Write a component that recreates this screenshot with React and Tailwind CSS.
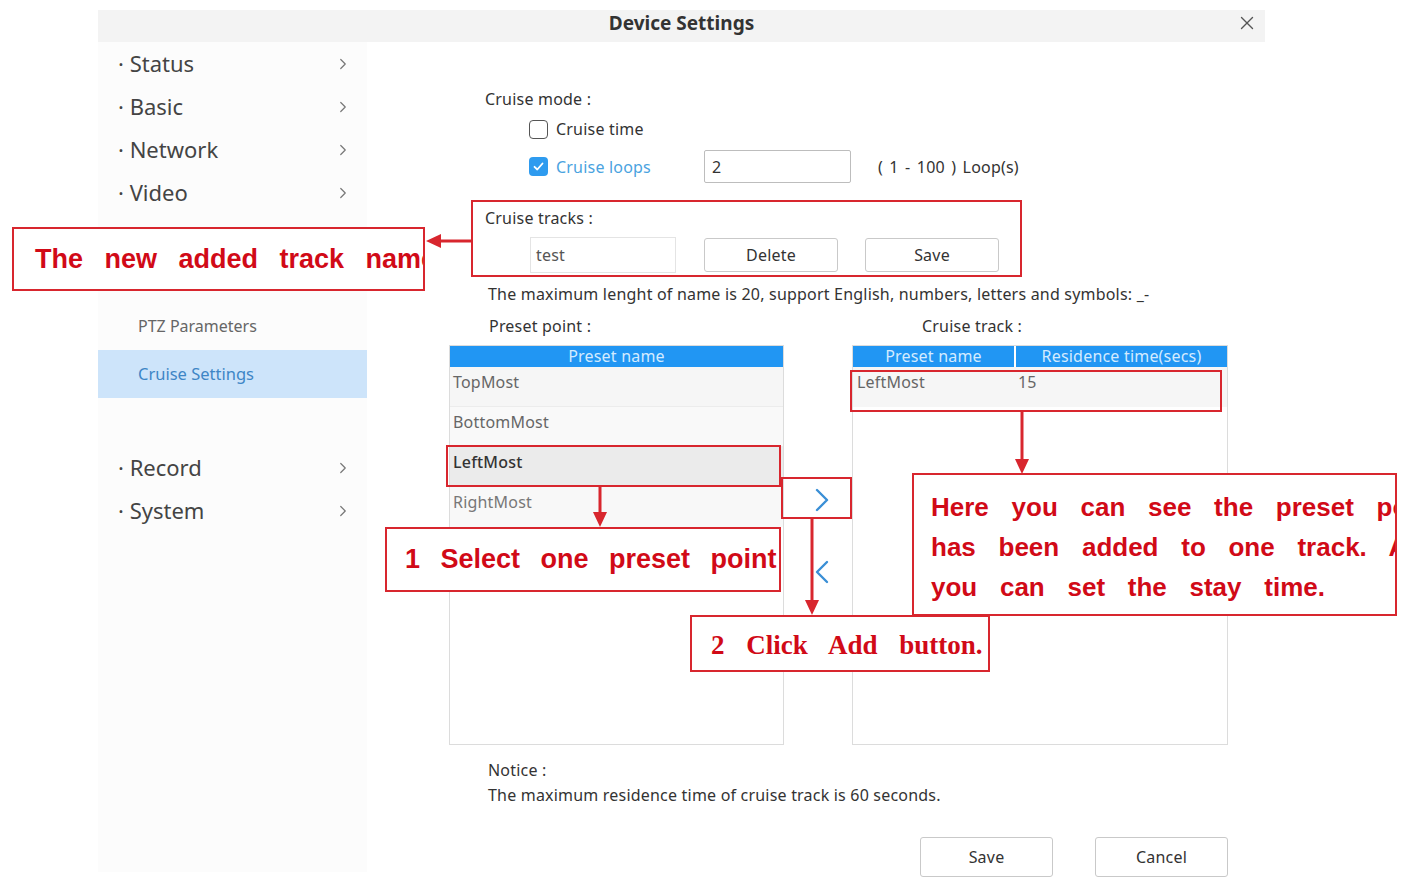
import React from "react";
import { ChevronRight, X } from "lucide-react";

const menuTop = ["Status", "Basic", "Network", "Video"];
const menuBottom = ["Record", "System"];

function MenuItem({ label }) {
  return (
    <div className="h-[43px] flex items-center justify-between pl-[20px] pr-[15px] text-[22px] text-[#444]">
      <span>· {label}</span>
      <ChevronRight size={18} strokeWidth={1.6} className="text-[#777]" />
    </div>
  );
}

function Chevron({ dir }) {
  return (
    <svg width="14" height="24" viewBox="0 0 14 24">
      <polyline
        points={dir === "right" ? "2,2 12,12 2,22" : "12,2 2,12 12,22"}
        fill="none"
        stroke="#3a8fd6"
        strokeWidth="2.4"
        strokeLinecap="round"
        strokeLinejoin="round"
      />
    </svg>
  );
}

export default function App() {
  return (
    <div className="relative w-[1409px] h-[881px] overflow-hidden bg-white font-['Noto_Sans',sans-serif]">
      {/* Dialog */}
      <div className="ml-[98px] w-[1167px] pt-[10px]">
        <div className="relative h-[32px] bg-[#f3f3f3] flex items-center justify-center pb-[6px]">
          <span className="text-[19px] font-bold text-[#333]">Device Settings</span>
          <X size={22} strokeWidth={1.5} className="absolute right-[7px] top-[2px] text-[#555]" />
        </div>

        <div className="flex">
          {/* Sidebar */}
          <div className="w-[269px] h-[830px] bg-[#fcfcfc] flex flex-col">
            {menuTop.map((m) => (
              <MenuItem key={m} label={m} />
            ))}
            <div className="h-[88px]" />
            <div className="h-[48px] flex items-center pl-[40px] text-[16px] text-[#666]">PTZ Parameters</div>
            <div className="h-[48px] flex items-center pl-[40px] text-[16.5px] text-[#3d86c6] bg-[#cde4fa]">Cruise Settings</div>
            <div className="h-[48px]" />
            {menuBottom.map((m) => (
              <MenuItem key={m} label={m} />
            ))}
          </div>

          {/* Content */}
          <div className="flex-1 pl-[82px] text-[16px] tracking-[0.2px] text-[#333]">
            <div className="mt-[46px] ml-[36px] leading-[22px]">Cruise mode :</div>

            <div className="mt-[4px] h-[30px] ml-[80px] flex items-center">
              <div className="w-[19px] h-[19px] rounded-[4px] border-[1.5px] border-[#555] bg-white" />
              <span className="ml-[8px]">Cruise time</span>
            </div>

            <div className="mt-[6px] h-[33px] ml-[80px] flex items-center">
              <div className="w-[19px] h-[19px] rounded-[4px] bg-[#2e9bef] flex items-center justify-center">
                <svg width="13" height="13" viewBox="0 0 13 13">
                  <polyline points="2.5,6.8 5.3,9.5 10.5,3.5" fill="none" stroke="#fff" strokeWidth="1.8" strokeLinecap="round" strokeLinejoin="round" />
                </svg>
              </div>
              <span className="ml-[8px] w-[148px] text-[#4aa3df]">Cruise loops</span>
              <div className="w-[147px] h-[33px] border border-[#bdbdbd] rounded-[2px] bg-white flex items-center pl-[7px]">2</div>
              <span className="ml-[27px] [word-spacing:2px]">( 1 - 100 ) Loop(s)</span>
            </div>

            <div className="mt-[24px] ml-[36px] leading-[22px]">Cruise tracks :</div>

            <div className="mt-[8px] ml-[81px] flex items-center">
              <div className="w-[146px] h-[36px] border border-[#e4e4e4] bg-white flex items-center pl-[5px] text-[#555]">test</div>
              <div className="ml-[28px] w-[134px] h-[34px] border border-[#c9c9c9] rounded-[3px] bg-white flex items-center justify-center">Delete</div>
              <div className="ml-[27px] w-[134px] h-[34px] border border-[#c9c9c9] rounded-[3px] bg-white flex items-center justify-center">Save</div>
            </div>

            <div className="mt-[10px] ml-[39px] leading-[22px] whitespace-nowrap tracking-[0.2px]">
              The maximum lenght of name is 20, support English, numbers, letters and symbols: _-
            </div>

            <div className="mt-[10px] ml-[40px] flex leading-[22px]">
              <span className="w-[433px]">Preset point :</span>
              <span>Cruise track :</span>
            </div>

            <div className="mt-[8px] flex">
              {/* Left table */}
              <div className="w-[335px] h-[400px] border border-[#dcdcdc] bg-white flex flex-col">
                <div className="h-[21px] bg-[#2196f3] text-[#d4ebff] text-center leading-[21px]">Preset name</div>
                <div className="h-[40px] bg-[#f6f6f6] border-b border-[#ececec] pl-[3px] pt-[3px] text-[#666]">TopMost</div>
                <div className="h-[40px] bg-[#f9f9f9] border-b border-[#ececec] pl-[3px] pt-[3px] text-[#666]">BottomMost</div>
                <div className="h-[40px] bg-[#ebebeb] pl-[3px] pt-[3px] text-[#333] font-medium">LeftMost</div>
                <div className="h-[40px] bg-[#f8f8f8] pl-[3px] pt-[3px] text-[#777]">RightMost</div>
              </div>

              {/* Middle arrows */}
              <div className="w-[68px] flex flex-col pt-[143px] pl-[31px] gap-[48px]">
                <Chevron dir="right" />
                <Chevron dir="left" />
              </div>

              {/* Right table */}
              <div className="w-[376px] h-[400px] border border-[#dcdcdc] bg-white flex flex-col">
                <div className="h-[21px] flex gap-[2px] text-[#d4ebff] leading-[21px]">
                  <div className="w-[161px] bg-[#2196f3] text-center">Preset name</div>
                  <div className="flex-1 bg-[#2196f3] text-center">Residence time(secs)</div>
                </div>
                <div className="h-[40px] bg-[#f6f6f6] flex pt-[3px] text-[#666]">
                  <span className="w-[163px] pl-[4px]">LeftMost</span>
                  <span className="pl-[2px]">15</span>
                </div>
              </div>
            </div>

            <div className="mt-[13px] ml-[39px] leading-[25px]">Notice :</div>
            <div className="ml-[39px] leading-[25px] tracking-[0.2px]">The maximum residence time of cruise track is 60 seconds.</div>

            <div className="mt-[29px] w-[779px] flex justify-end gap-[42px]">
              <div className="w-[133px] h-[40px] border border-[#c9c9c9] rounded-[3px] bg-white flex items-center justify-center">Save</div>
              <div className="w-[133px] h-[40px] border border-[#c9c9c9] rounded-[3px] bg-white flex items-center justify-center">Cancel</div>
            </div>
          </div>
        </div>
      </div>

      {/* Red highlight outlines */}
      <div className="absolute left-[471px] top-[200px] w-[551px] h-[77px] border-2 border-[#d8262e]" />
      <div className="absolute left-[446px] top-[445px] w-[335px] h-[42px] border-2 border-[#d8262e]" />
      <div className="absolute left-[781px] top-[477px] w-[71px] h-[42px] border-2 border-[#d8262e]" />
      <div className="absolute left-[850px] top-[370px] w-[372px] h-[42px] border-2 border-[#d8262e]" />

      {/* Annotation boxes */}
      <div className="absolute left-[12px] top-[227px] w-[413px] h-[64px] border-2 border-[#d8262e] bg-white overflow-hidden flex items-center pl-[21px] whitespace-nowrap font-['Liberation_Sans',Arial,sans-serif] font-bold text-[27px] text-[#d10a17] [word-spacing:14px]">
        The new added track name
      </div>

      <div className="absolute left-[385px] top-[527px] w-[396px] h-[65px] border-2 border-[#d8262e] bg-white overflow-hidden flex items-center pl-[18px] whitespace-nowrap font-['Liberation_Sans',Arial,sans-serif] font-bold text-[27px] text-[#d10a17] [word-spacing:13px]">
        1 Select one preset point
      </div>

      <div className="absolute left-[690px] top-[615px] w-[300px] h-[57px] border-2 border-[#d8262e] bg-white overflow-hidden flex items-center pl-[19px] pt-[4px] whitespace-nowrap font-['Liberation_Serif','Times_New_Roman',serif] font-bold text-[27px] text-[#d10a17] [word-spacing:15px]">
        2 Click Add button.
      </div>

      <div className="absolute left-[912px] top-[473px] w-[485px] h-[143px] border-2 border-[#d8262e] bg-white overflow-hidden pl-[17px] pt-[12px] whitespace-nowrap font-['Liberation_Sans',Arial,sans-serif] font-bold text-[26px] leading-[40px] text-[#d10a17] [word-spacing:15.5px]">
        <div>Here you can see the preset point</div>
        <div>has been added to one track. And</div>
        <div>you can set the stay time.</div>
      </div>

      {/* Arrows */}
      <svg className="absolute left-0 top-0 pointer-events-none" width="1409" height="881" viewBox="0 0 1409 881">
        <g stroke="#d8262e" strokeWidth="3" fill="none">
          <line x1="471" y1="241" x2="438" y2="241" />
          <line x1="600" y1="487" x2="600" y2="514" />
          <line x1="812" y1="519" x2="812" y2="602" />
          <line x1="1022" y1="412" x2="1022" y2="460" />
        </g>
        <g fill="#d8262e">
          <polygon points="426,241 441,234 441,248" />
          <polygon points="600,527 593,512 607,512" />
          <polygon points="812,615 805,600 819,600" />
          <polygon points="1022,474 1015,459 1029,459" />
        </g>
      </svg>
    </div>
  );
}
